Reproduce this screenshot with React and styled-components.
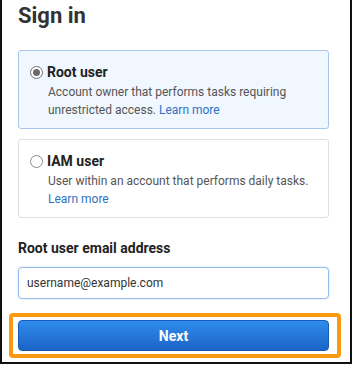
import React from 'react';
import styled, { createGlobalStyle } from 'styled-components';

const GlobalStyle = createGlobalStyle`
  body {
    margin: 0;
    background: #ffffff;
    font-family: Roboto, 'Noto Sans', sans-serif;
  }
`;

const Frame = styled.div`
  width: 352px;
  height: 364px;
  box-sizing: border-box;
  border-left: 2px solid #111;
  border-right: 2px solid #111;
  border-bottom: 2px solid #111;
  padding: 1px 21px 0 16px;
  display: flex;
  flex-direction: column;
  background: #fff;
`;

const Heading = styled.h1`
  margin: 0;
  font-size: 22px;
  line-height: 30px;
  font-weight: 700;
  color: #333;
`;

const Options = styled.div`
  display: flex;
  flex-direction: column;
  gap: 10px;
  margin-top: 19px;
`;

const Card = styled.label`
  display: grid;
  grid-template-columns: 13px 1fr;
  column-gap: 4px;
  padding: 11px 11px 9px 11px;
  border: 1px solid ${p => (p.$checked ? '#a6c6ee' : '#dedede')};
  border-radius: 3px;
  background: ${p => (p.$checked ? '#f0f7ff' : '#ffffff')};
`;

const Radio = styled.span`
  width: 13px;
  height: 13px;
  box-sizing: border-box;
  border-radius: 50%;
  align-self: center;
  border: ${p => (p.$checked ? '1.5px solid #6f6f6f' : '1px solid #8a8a8a')};
  background: ${p => (p.$checked ? '#fff' : 'transparent')};
  display: flex;
  align-items: center;
  justify-content: center;

  &::after {
    content: '';
    display: ${p => (p.$checked ? 'block' : 'none')};
    width: 7px;
    height: 7px;
    border-radius: 50%;
    background: #6a6a6a;
  }
`;

const Title = styled.span`
  font-size: 14px;
  line-height: 20px;
  font-weight: 700;
  color: #222;
`;

const Description = styled.p`
  grid-column: 2;
  margin: 1px 0 0 1px;
  font-size: 12px;
  line-height: 18px;
  color: #555;
`;

const Link = styled.a`
  color: #2d72c4;
  text-decoration: none;
`;

const FieldLabel = styled.div`
  margin-top: 21px;
  font-size: 14px;
  line-height: 18px;
  font-weight: 700;
  color: #222;
`;

const Input = styled.input`
  margin-top: 10px;
  height: 32px;
  box-sizing: border-box;
  padding: 0 8px;
  border: 1px solid #94bdec;
  border-radius: 4px;
  font-family: Roboto, sans-serif;
  font-size: 12px;
  color: #333;
  outline: none;
  box-shadow: 0 0 2px rgba(80, 150, 230, 0.35);
`;

const Highlight = styled.div`
  position: relative;
  margin-top: 21px;

  &::before {
    content: '';
    position: absolute;
    left: -9px;
    right: -12px;
    top: -7px;
    bottom: -7px;
    border: 4px solid #f99a12;
    border-radius: 4px;
    pointer-events: none;
  }
`;

const Button = styled.button`
  width: 100%;
  height: 31px;
  border: 1px solid #175ab5;
  border-radius: 4px;
  background: linear-gradient(#2f8cec, #1b64c6);
  color: #fff;
  font-family: Roboto, sans-serif;
  font-size: 14px;
  font-weight: 700;
  cursor: pointer;
`;

const options = [
  {
    id: 'root',
    title: 'Root user',
    text: 'Account owner that performs tasks requiring unrestricted access.',
    checked: true,
  },
  {
    id: 'iam',
    title: 'IAM user',
    text: 'User within an account that performs daily tasks.',
    checked: false,
  },
];

export default function App() {
  return (
    <>
      <GlobalStyle />
      <Frame>
        <Heading>Sign in</Heading>
        <Options>
          {options.map(o => (
            <Card key={o.id} $checked={o.checked}>
              <Radio $checked={o.checked} />
              <Title>{o.title}</Title>
              <Description>
                {o.text} <Link href="#">Learn more</Link>
              </Description>
            </Card>
          ))}
        </Options>
        <FieldLabel>Root user email address</FieldLabel>
        <Input defaultValue="username@example.com" />
        <Highlight>
          <Button>Next</Button>
        </Highlight>
      </Frame>
    </>
  );
}
